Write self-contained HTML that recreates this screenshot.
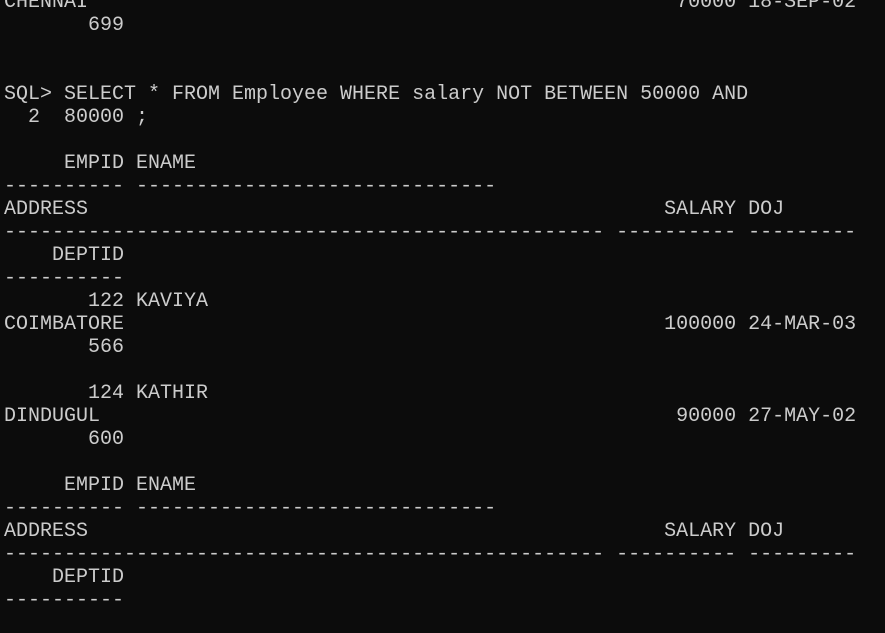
<!DOCTYPE html>
<html><head><meta charset="utf-8"><style>
html,body{margin:0;padding:0;background:#0c0c0c;width:885px;height:633px;overflow:hidden}
pre{position:absolute;left:4px;top:-9px;margin:0;font-family:"Liberation Mono",monospace;font-size:20px;line-height:23px;color:#cccccc;white-space:pre}
</style></head><body><pre>CHENNAI                                                 70000 18-SEP-02
       699


SQL&gt; SELECT * FROM Employee WHERE salary NOT BETWEEN 50000 AND
  2  80000 ;

     EMPID ENAME
---------- ------------------------------
ADDRESS                                                SALARY DOJ
-------------------------------------------------- ---------- ---------
    DEPTID
----------
       122 KAVIYA
COIMBATORE                                             100000 24-MAR-03
       566

       124 KATHIR
DINDUGUL                                                90000 27-MAY-02
       600

     EMPID ENAME
---------- ------------------------------
ADDRESS                                                SALARY DOJ
-------------------------------------------------- ---------- ---------
    DEPTID
----------
</pre></body></html>
